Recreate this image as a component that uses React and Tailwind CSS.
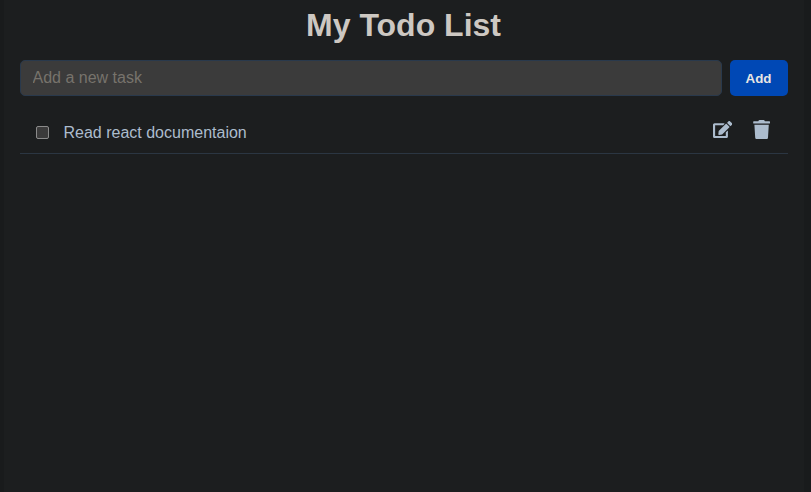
import { FaEdit, FaTrash } from "react-icons/fa";

export default function App() {
  return (
    <div className="min-h-screen bg-[#191b1c] pl-[3.5px] font-['Liberation_Sans',Arial,sans-serif] text-base leading-6 text-[#acbccd]">
      <main className="min-h-screen w-[800px] bg-[#1c1e1f] px-4 pt-1">
        <h1 className="mb-3.5 text-center text-[32px] leading-[42px] font-bold text-[#cdc8c2]">My Todo List</h1>
        <form className="flex gap-2" onSubmit={(e) => e.preventDefault()}>
          <input
            className="h-9 min-w-0 flex-1 rounded-[5px] border border-[#29394c] bg-[#3b3b3b] px-3 text-base text-[#acbccd] outline-none placeholder:text-[#77736c]"
            placeholder="Add a new task"
          />
          <button className="h-9 w-[58px] rounded-[5px] bg-[#0048b5] pt-0.5 text-[13.333px] font-bold text-[#e8e6e3]">Add</button>
        </form>
        <ul className="mt-4">
          <li className="flex h-[42px] items-center border-b border-[#2b3642] px-4">
            <input type="checkbox" className="size-[13px] appearance-none rounded-[2px] border border-[#8b8b8b] bg-[#3b3b3b]" />
            <span className="ml-[15px] flex-1 pt-px">Read react documentaion</span>
            <button aria-label="Edit" className="mr-5 mb-1.5"><FaEdit size={19.2} /></button>
            <button aria-label="Delete" className="mb-1.5"><FaTrash size={19.2} /></button>
          </li>
        </ul>
      </main>
    </div>
  );
}
